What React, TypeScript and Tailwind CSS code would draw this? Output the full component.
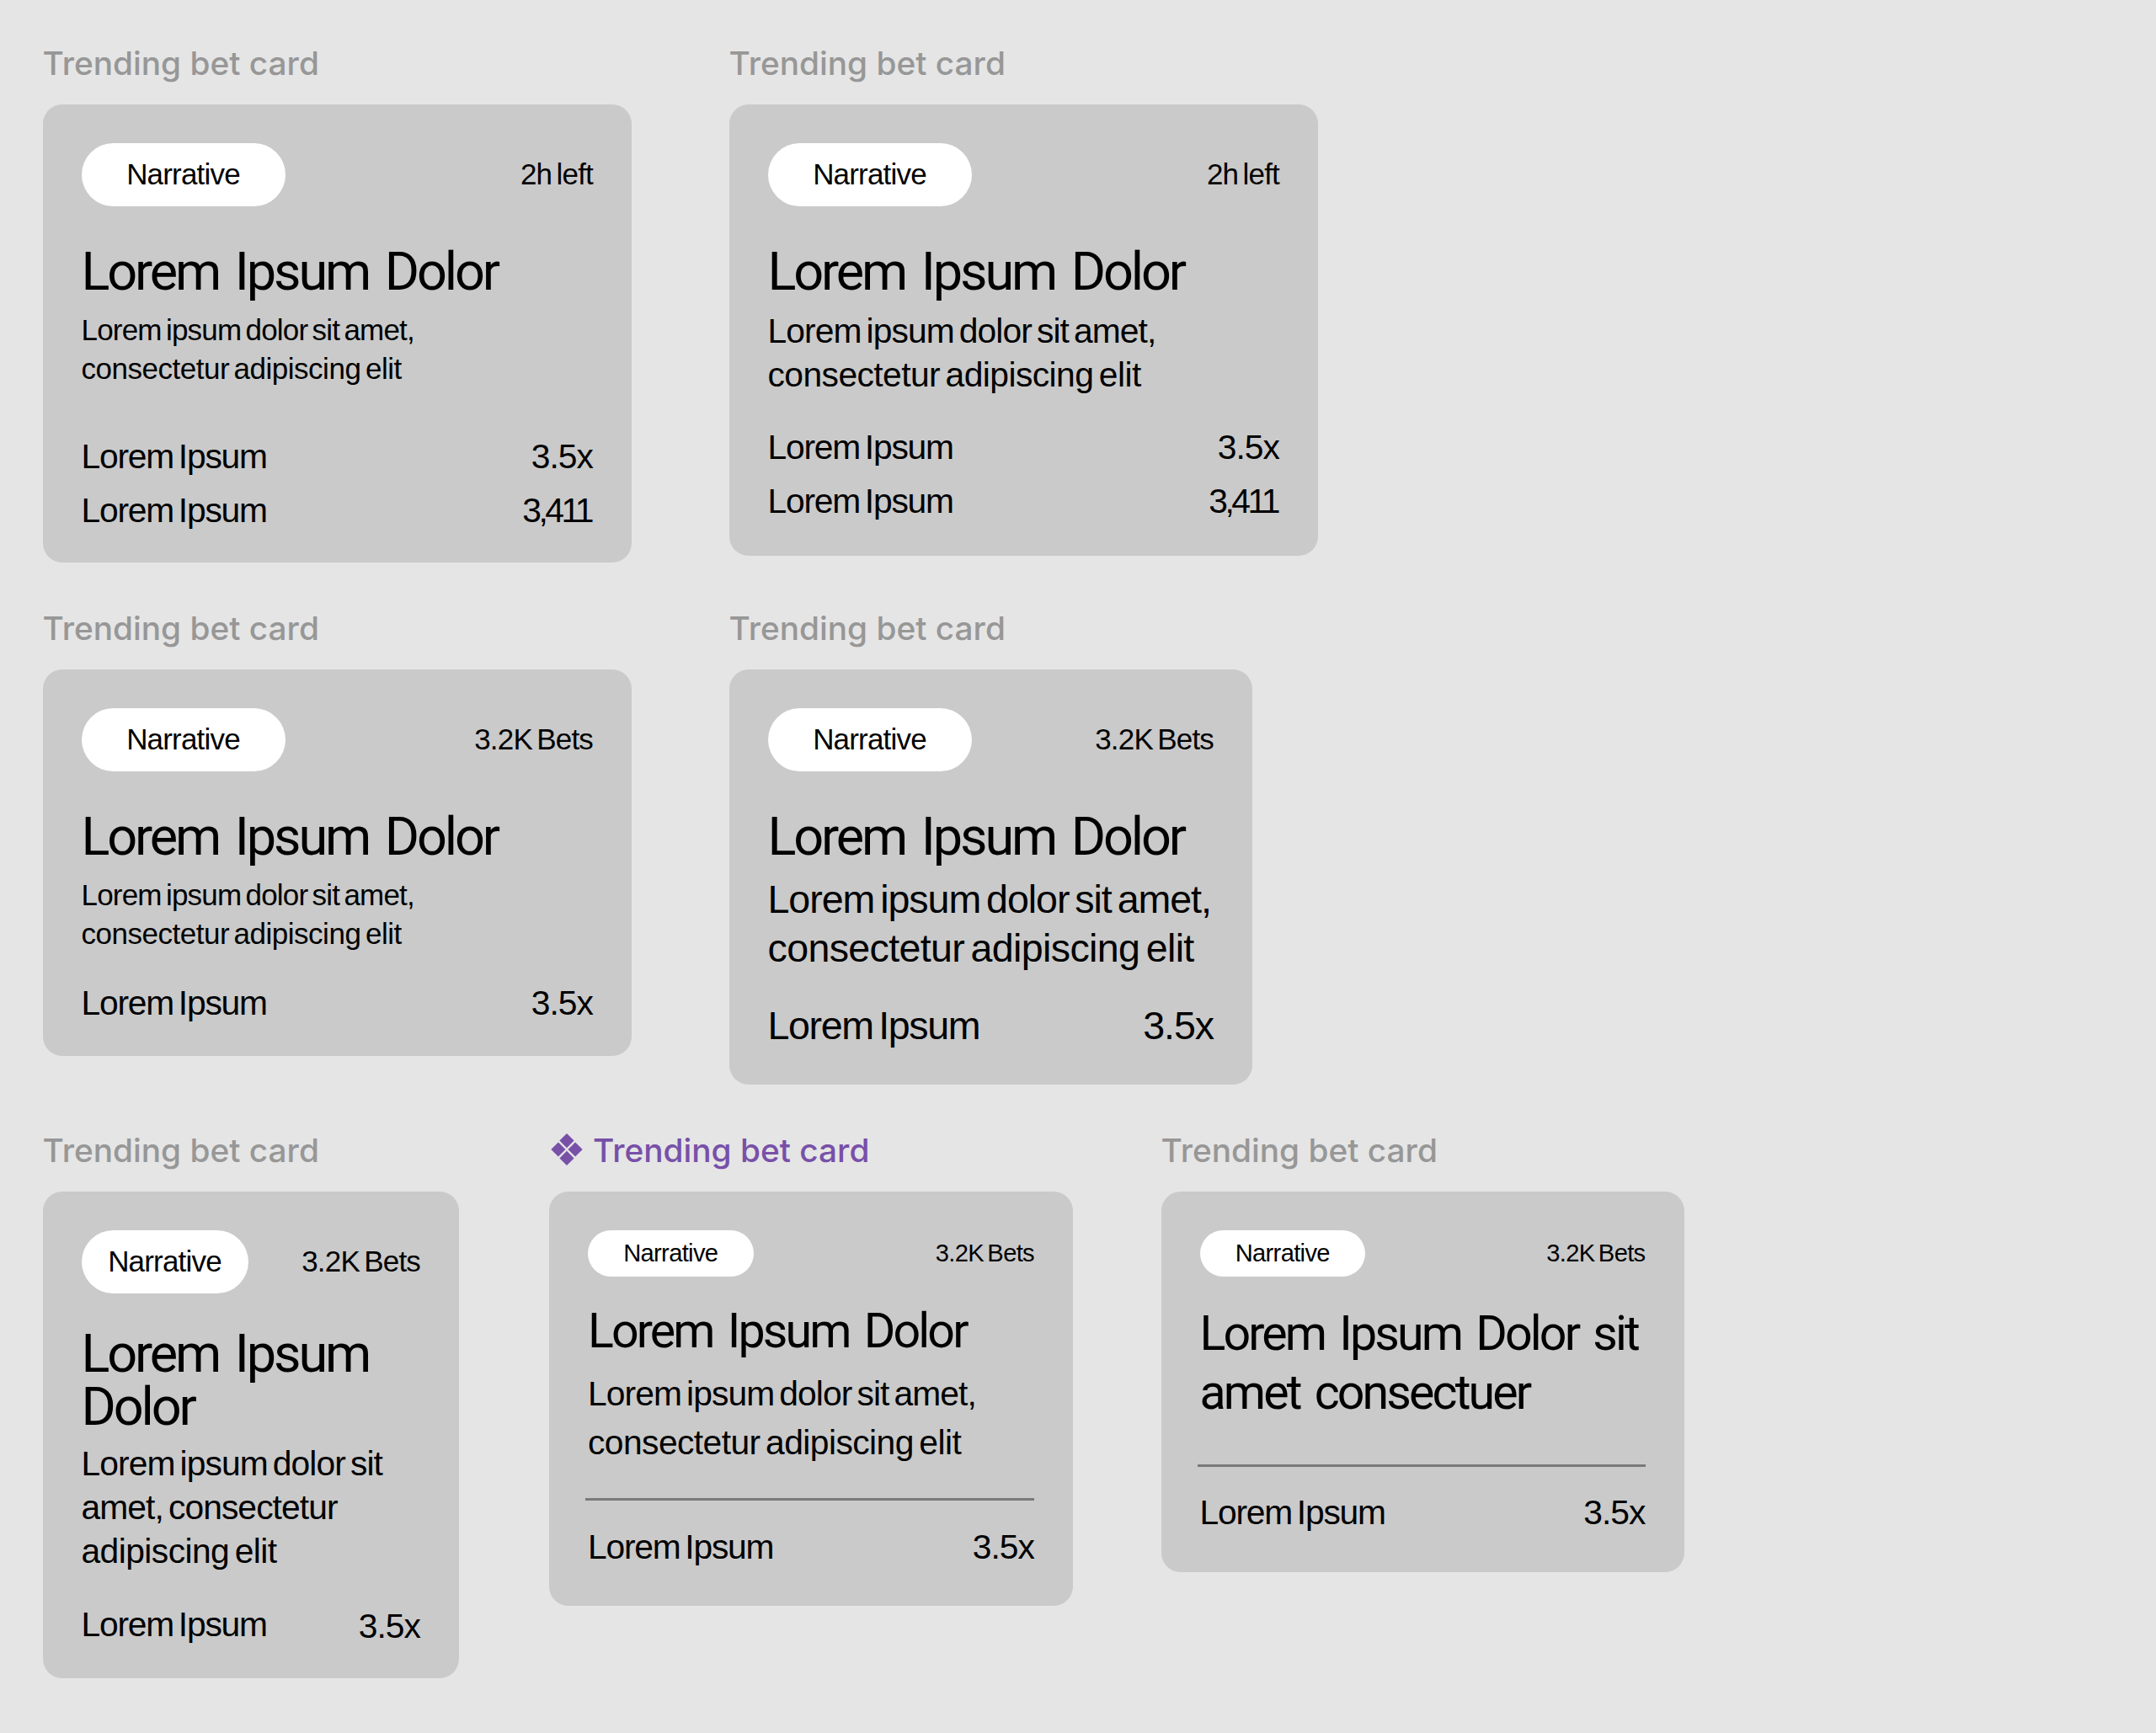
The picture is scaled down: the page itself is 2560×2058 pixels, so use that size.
import clsx from 'clsx'

interface BetRow {
  label: string
  value: string
  valueClass?: string
}

interface TrendingBetCardProps {
  meta: string
  title: string[]
  description?: string[]
  rows: BetRow[]
  divider?: boolean
  size?: 'sm' | 'md'
  isComponent?: boolean
  // per-variant sizing
  cardClass: string
  pillClass: string
  titleClass: string
  descriptionClass?: string
  dividerClass?: string
  rowsClass: string
}

// em based, so it has to sit on the element that sets the font size
const BODY_TRACKING = 'tracking-[-0.023em] [word-spacing:-0.105em]'

function ComponentIcon() {
  return (
    <svg viewBox="0 0 38 38" className="w-[38px] h-[38px] ml-[2px] mr-[12px] mt-[7px] shrink-0" fill="currentColor">
      <path d="M19 0 L27.6 8.6 L19 17.2 L10.4 8.6 Z" />
      <path d="M8.9 10.4 L17.5 19 L8.9 27.6 L0.3 19 Z" />
      <path d="M29.1 10.4 L37.7 19 L29.1 27.6 L20.5 19 Z" />
      <path d="M19 20.8 L27.6 29.4 L19 38 L10.4 29.4 Z" />
    </svg>
  )
}

function TrendingBetCard({
  meta,
  title,
  description,
  rows,
  divider,
  size = 'md',
  isComponent,
  cardClass,
  pillClass,
  titleClass,
  descriptionClass,
  dividerClass,
  rowsClass,
}: TrendingBetCardProps) {
  const small = clsx(size === 'sm' ? 'text-[29.15px]' : 'text-[35px]', BODY_TRACKING)

  return (
    <div className="flex flex-col">
      <div
        className={clsx(
          "flex h-[76px] font-['Inter',sans-serif] text-[38.8px] leading-[53px] font-medium whitespace-nowrap",
          isComponent ? 'text-[#7850a8]' : 'text-[#979797]',
        )}
      >
        {isComponent && <ComponentIcon />}
        <span>Trending bet card</span>
      </div>

      <div
        className={clsx(
          'flex flex-col rounded-[23px] bg-[#cacaca] px-[46px] pt-[46px] text-black whitespace-nowrap',
          cardClass,
        )}
      >
        <div className="flex items-center justify-between">
          <div className={clsx('flex items-center justify-center rounded-full bg-white', small, pillClass)}>
            Narrative
          </div>
          <span className={small}>{meta}</span>
        </div>

        <h2
          className={clsx(
            "font-['Roboto',sans-serif] tracking-[-0.05em] [word-spacing:0.1em]",
            titleClass,
          )}
        >
          {title.map((line) => (
            <span key={line} className="block">{line}</span>
          ))}
        </h2>

        {description && (
          <p className={clsx(BODY_TRACKING, descriptionClass)}>
            {description.map((line) => (
              <span key={line} className="block last:tracking-[-0.014em]">{line}</span>
            ))}
          </p>
        )}

        {divider && <div className={clsx('h-[3px] -ml-[3px] bg-[#7a7a7a]', dividerClass)} />}

        <div className={clsx('flex flex-col gap-[12px]', BODY_TRACKING, rowsClass)}>
          {rows.map((row) => (
            <div key={row.value} className="flex justify-between">
              <span className="tracking-[-0.03em]">{row.label}</span>
              <span className={row.valueClass}>{row.value}</span>
            </div>
          ))}
        </div>
      </div>
    </div>
  )
}

const TITLE = ['Lorem Ipsum Dolor']
const DESCRIPTION = ['Lorem ipsum dolor sit amet,', 'consectetur adipiscing elit']
const MULTIPLIER: BetRow = { label: 'Lorem Ipsum', value: '3.5x' }
const COUNT: BetRow = { label: 'Lorem Ipsum', value: '3,411', valueClass: 'tracking-[-0.085em] pr-[2px]' }

export default function App() {
  return (
    <main className="w-[2560px] h-[2058px] overflow-hidden bg-[#e5e5e5] pt-[48px] pl-[50.5px] font-['Liberation_Sans',sans-serif]">
      <section className="flex items-start gap-[115.5px]">
        <TrendingBetCard
          meta="2h left"
          title={TITLE}
          description={DESCRIPTION}
          rows={[MULTIPLIER, COUNT]}
          cardClass="w-[699.5px] h-[544px]"
          pillClass="w-[242px] h-[75px]"
          titleClass="mt-[46px] text-[63px] leading-[64px]"
          descriptionClass="mt-[14px] text-[35px] leading-[46px]"
          rowsClass="mt-[55px] text-[40.8px] leading-[52px]"
        />
        <TrendingBetCard
          meta="2h left"
          title={TITLE}
          description={DESCRIPTION}
          rows={[MULTIPLIER, COUNT]}
          cardClass="w-[699.5px] h-[536px]"
          pillClass="w-[242px] h-[75px]"
          titleClass="mt-[46px] text-[63px] leading-[64px]"
          descriptionClass="mt-[11.5px] text-[40.8px] leading-[52px]"
          rowsClass="mt-[34px] text-[40.8px] leading-[52px]"
        />
      </section>

      <section className="mt-[51px] flex items-start gap-[115.5px]">
        <TrendingBetCard
          meta="3.2K Bets"
          title={TITLE}
          description={DESCRIPTION}
          rows={[MULTIPLIER]}
          cardClass="w-[699.5px] h-[459px]"
          pillClass="w-[242px] h-[75px]"
          titleClass="mt-[46px] text-[63px] leading-[64px]"
          descriptionClass="mt-[14px] text-[35px] leading-[46px]"
          rowsClass="mt-[33px] text-[40.8px] leading-[52px]"
        />
        <TrendingBetCard
          meta="3.2K Bets"
          title={TITLE}
          description={DESCRIPTION}
          rows={[MULTIPLIER]}
          cardClass="w-[621.5px] h-[492.5px]"
          pillClass="w-[242px] h-[75px]"
          titleClass="mt-[46px] text-[63px] leading-[64px]"
          descriptionClass="mt-[13px] text-[46.6px] leading-[58px]"
          rowsClass="mt-[33.5px] text-[46.6px] leading-[58px]"
        />
      </section>

      <section className="mt-[51.5px] flex items-start">
        <TrendingBetCard
          meta="3.2K Bets"
          title={['Lorem Ipsum', 'Dolor']}
          description={['Lorem ipsum dolor sit', 'amet, consectetur', 'adipiscing elit']}
          rows={[{ ...MULTIPLIER, valueClass: 'pt-[2px] -mb-[2px]' }]}
          cardClass="w-[494.5px] h-[578px]"
          pillClass="w-[198px] h-[75px]"
          titleClass="mt-[39.5px] text-[63px] leading-[63px]"
          descriptionClass="mt-[10.5px] text-[40.8px] leading-[52px]"
          rowsClass="mt-[35px] text-[40.8px] leading-[52px]"
        />
        <div className="w-[107px]" />
        <TrendingBetCard
          isComponent
          size="sm"
          meta="3.2K Bets"
          title={TITLE}
          description={DESCRIPTION}
          rows={[MULTIPLIER]}
          divider
          cardClass="w-[622px] h-[492px]"
          pillClass="w-[196.5px] h-[55px]"
          titleClass="mt-[30px] text-[57.3px] leading-[70px]"
          descriptionClass="mt-[9.5px] text-[40.8px] leading-[58px]"
          dividerClass="mt-[37px]"
          rowsClass="mt-[29px] text-[40.8px] leading-[52px]"
        />
        <div className="w-[104.5px]" />
        <TrendingBetCard
          size="sm"
          meta="3.2K Bets"
          title={['Lorem Ipsum Dolor sit', 'amet consectuer']}
          rows={[MULTIPLIER]}
          divider
          cardClass="w-[621px] h-[452px]"
          pillClass="w-[196.5px] h-[55px]"
          titleClass="mt-[33px] text-[57.3px] leading-[69.5px]"
          dividerClass="mt-[50.5px]"
          rowsClass="mt-[28.5px] text-[40.8px] leading-[52px]"
        />
      </section>
    </main>
  )
}
